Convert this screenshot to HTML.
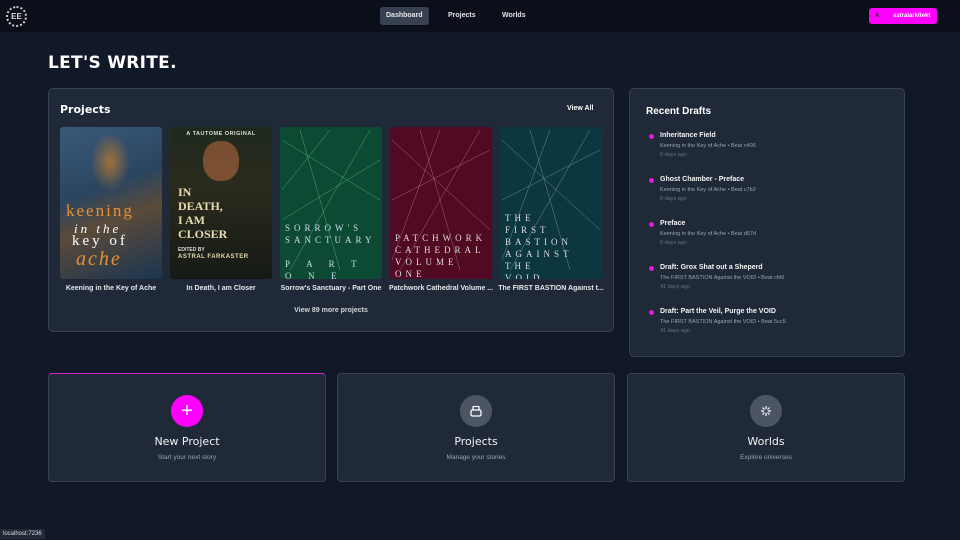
<!DOCTYPE html>
<html><head><meta charset="utf-8"><style>
*{box-sizing:border-box;margin:0;padding:0}
body{width:960px;height:540px;overflow:hidden;background:#111827;font-family:"Liberation Sans",sans-serif;color:#fff;position:relative}
.hdr{position:absolute;left:0;top:0;width:960px;height:32px;background:#0b0f19}
.logo{position:absolute;left:6px;top:6px;width:21px;height:21px;border-radius:50%;border:2px dotted #ccc;font-size:8px;font-weight:bold;display:flex;align-items:center;justify-content:center;color:#ddd}
.nav{position:absolute;top:7px;height:18px;font-size:7px;font-weight:bold;line-height:18px;padding:0 6px;border-radius:3px;color:#e5e7eb}
.user{position:absolute;left:869px;top:8px;width:68px;height:16px;background:#f0f;border-radius:3px;font-size:6px;color:#fff;line-height:16px}
h1{position:absolute;left:48px;top:53px;font-size:17px;letter-spacing:.3px;font-weight:bold;font-family:"DejaVu Sans",sans-serif}
.panel{position:absolute;background:#1f2937;border:1px solid #374151;border-radius:5px}
.cov{position:absolute;top:127px;width:102px;height:152px;border-radius:3px;overflow:hidden}
.cap{position:absolute;top:285px;width:110px;font-size:7px;font-weight:bold;color:#e5e7eb;text-align:center}
.dr{position:absolute;left:650px}
.dr b{display:block;font-size:7px;color:#f3f4f6}
.dr i{font-style:normal;display:block;font-size:5.5px;color:#9ca3af;margin-top:4px}
.dr s{text-decoration:none;display:block;font-size:5.5px;color:#6b7280;margin-top:3px}
.dot{position:absolute;left:-1px;top:2px;width:5px;height:5px;border-radius:50%;background:#e01ee0}
.dr>div{padding-left:10px;position:relative}
.card{position:absolute;top:373px;height:109px;background:#1f2937;border:1px solid #374151;border-radius:4px;text-align:center}
.ic{width:32px;height:32px;border-radius:50%;margin:21px auto 0;display:flex;align-items:center;justify-content:center}
.card h3{font-size:11px;font-family:"DejaVu Sans",sans-serif;font-weight:normal;margin-top:8px;color:#f3f4f6}
.card p{font-size:6.5px;color:#9ca3af;margin-top:6px}
.ctxt{position:absolute;font-family:"Liberation Serif",serif;color:#ddd;font-size:9px;letter-spacing:4px;line-height:12px}
</style></head><body>
<div class="hdr">
<div class="logo">EE</div>
<div class="nav" style="left:380px;background:#374151">Dashboard</div>
<div class="nav" style="left:442px">Projects</div>
<div class="nav" style="left:496px">Worlds</div>
<div class="user"><span style="position:absolute;left:6px;color:#333;font-weight:bold">A</span><span style="position:absolute;left:24px;font-weight:bold">astralarkitekt</span></div>
</div>
<h1>LET'S WRITE.</h1>
<div class="panel" style="left:48px;top:88px;width:566px;height:244px"></div>
<div style="position:absolute;left:60px;top:103px;font-size:11px;font-weight:bold;font-family:'DejaVu Sans',sans-serif">Projects</div>
<div style="position:absolute;left:567px;top:105px;font-size:7px;font-weight:bold">View All</div>
<div class="cov" style="left:60px;background:linear-gradient(160deg,#3a5a7a,#2a4560 40%,#5a4a3a 60%,#1a3550)">
<div style="position:absolute;left:30px;top:5px;width:40px;height:60px;background:radial-gradient(#a0703a,transparent 70%)"></div>
<div style="position:absolute;left:6px;top:74px;font-family:'Liberation Serif',serif;color:#e89030;font-size:17px;letter-spacing:2px">keening</div>
<div style="position:absolute;left:14px;top:94px;font-family:'Liberation Serif',serif;font-style:italic;color:#fff;font-size:13px;letter-spacing:3px">in the</div>
<div style="position:absolute;left:12px;top:106px;font-family:'Liberation Serif',serif;color:#fff;font-size:15px;letter-spacing:3px">key of</div>
<div style="position:absolute;left:16px;top:121px;font-family:'Liberation Serif',serif;font-style:italic;color:#e89030;font-size:20px;letter-spacing:2px">ache</div>
</div>
<div class="cov" style="left:170px;background:linear-gradient(180deg,#1e2a1c,#2b2a1e 40%,#151a14)">
<div style="position:absolute;left:0;top:4px;width:102px;text-align:center;font-size:5.5px;color:#ddd;font-weight:bold;letter-spacing:.5px">A TAUTOME ORIGINAL</div>
<div style="position:absolute;left:33px;top:14px;width:36px;height:40px;border-radius:45%;background:#a0603a;opacity:.7"></div>
<div style="position:absolute;left:8px;top:58px;font-size:12px;line-height:14px;color:#e8dcb0;font-family:'Liberation Serif',serif;font-weight:bold">IN<br>DEATH,<br>I AM<br>CLOSER</div>
<div style="position:absolute;left:8px;top:120px;font-size:5px;color:#ddd;font-weight:bold">EDITED BY</div>
<div style="position:absolute;left:8px;top:127px;font-size:6px;color:#e8dcb0;font-weight:bold;letter-spacing:.5px">ASTRAL FARKASTER</div>
</div>
<div class="cov" style="left:280px;background:#0d4a33"><div class="ctxt" style="left:5px;top:95px;color:#cde">SORROW'S<br>SANCTUARY<br><br>P &nbsp;A &nbsp;R &nbsp;T<br>O &nbsp;N &nbsp;E</div></div>
<div class="cov" style="left:390px;background:#520a24"><div class="ctxt" style="left:5px;top:105px">PATCHWORK<br>CATHEDRAL<br>VOLUME<br>ONE</div></div>
<div class="cov" style="left:500px;background:#0c3640"><div class="ctxt" style="left:5px;top:85px">THE<br>FIRST<br>BASTION<br>AGAINST<br>THE<br>VOID</div></div>
<svg style="position:absolute;left:0;top:0" width="960" height="540"><g stroke="#8fc" stroke-width=".5" opacity=".5" fill="none">
<path d="M282 140L380 200M290 270L370 130M300 130L340 270M282 220L380 160M330 130L282 190"/></g>
<g stroke="#dcc" stroke-width=".5" opacity=".5"><path d="M392 140L490 230M400 270L480 130M420 130L460 270M392 200L490 150M440 130L392 260"/></g>
<g stroke="#cde" stroke-width=".5" opacity=".5"><path d="M502 140L600 230M510 270L590 130M530 130L570 270M502 200L600 150M550 130L502 260"/></g></svg>
<div class="cap" style="left:56px">Keening in the Key of Ache</div>
<div class="cap" style="left:166px">In Death, I am Closer</div>
<div class="cap" style="left:276px">Sorrow's Sanctuary - Part One</div>
<div class="cap" style="left:386px">Patchwork Cathedral Volume ...</div>
<div class="cap" style="left:496px;white-space:nowrap;overflow:hidden">The FIRST BASTION Against t...</div>
<div style="position:absolute;left:0;width:662px;top:307px;text-align:center;font-size:7px;font-weight:bold;color:#d1d5db">View 89 more projects</div>

<div class="panel" style="left:629px;top:88px;width:276px;height:269px"></div>
<div style="position:absolute;left:646px;top:106px;font-size:10px;font-weight:bold">Recent Drafts</div>
<div class="dr" style="top:132px"><div><span class="dot"></span><b>Inheritance Field</b><i>Keening in the Key of Ache • Beat c406</i><s>8 days ago</s></div></div>
<div class="dr" style="top:176px"><div><span class="dot"></span><b>Ghost Chamber - Preface</b><i>Keening in the Key of Ache • Beat c7b2</i><s>8 days ago</s></div></div>
<div class="dr" style="top:220px"><div><span class="dot"></span><b>Preface</b><i>Keening in the Key of Ache • Beat d67d</i><s>8 days ago</s></div></div>
<div class="dr" style="top:264px"><div><span class="dot"></span><b>Draft: Grox Shat out a Sheperd</b><i>The FIRST BASTION Against the VOID • Beat cfd6</i><s>41 days ago</s></div></div>
<div class="dr" style="top:308px"><div><span class="dot"></span><b>Draft: Part the Veil, Purge the VOID</b><i>The FIRST BASTION Against the VOID • Beat 5cc5</i><s>41 days ago</s></div></div>

<div class="card" style="left:48px;width:278px;border-top:1px solid #d020d0"><div class="ic" style="background:#f0f;font-size:20px;color:#fff">+</div><h3>New Project</h3><p>Start your next story</p></div>
<div class="card" style="left:337px;width:278px"><div class="ic" style="background:#4b5563"><svg width="14" height="14" viewBox="0 0 14 14" fill="none" stroke="#fff" stroke-width="1.3"><rect x="2" y="6" width="10" height="6" rx="1.5"/><path d="M4 6V3.5a1 1 0 0 1 1-1h4a1 1 0 0 1 1 1V6"/></svg></div><h3>Projects</h3><p>Manage your stories</p></div>
<div class="card" style="left:627px;width:278px"><div class="ic" style="background:#4b5563"><svg width="14" height="14" viewBox="0 0 14 14" fill="none" stroke="#fff" stroke-width="1.2"><path d="M7 2v3M7 9v3M2 7h3M9 7h3M3.5 3.5l2 2M8.5 8.5l2 2M10.5 3.5l-2 2M5.5 8.5l-2 2"/></svg></div><h3>Worlds</h3><p>Explore universes</p></div>
<div style="position:absolute;left:0;top:529px;background:#1f2937;font-size:6px;padding:2px 3px;color:#ddd">localhost:7236</div>
</body></html>
